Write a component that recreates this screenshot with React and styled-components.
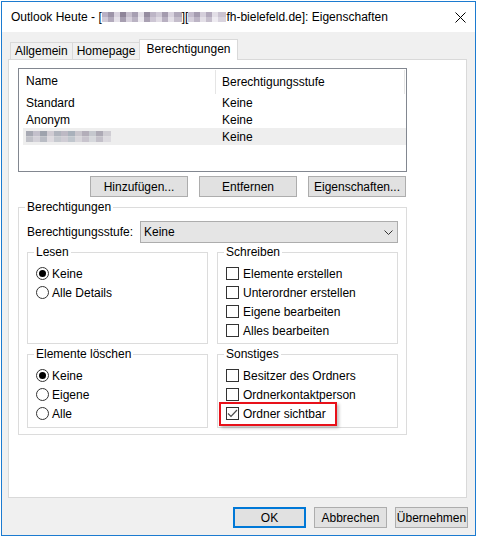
import React from "react";
import styled, { createGlobalStyle, css } from "styled-components";

const Global = createGlobalStyle`
  html, body { margin: 0; padding: 0; background: #ffffff; }
  body { font-family: "Liberation Sans", Arial, sans-serif; font-size: 12px; color: #000; }
  * { box-sizing: border-box; }
`;

const Window = styled.div`
  margin: 1px;
  width: 475px;
  height: 535px;
  border: 1px solid #1c7bd0;
  background: #f0f0f0;
  display: flex;
  flex-direction: column;
`;

const TitleBar = styled.div`
  height: 30px;
  flex: 0 0 30px;
  background: #ffffff;
  display: flex;
  align-items: center;
  padding: 0 9px;
  font-size: 12px;
  white-space: nowrap;
`;

const TitleText = styled.div`
  display: flex;
  align-items: center;
`;

const Mosaic = styled.span`
  display: inline-block;
  height: ${(p) => p.$h || 10}px;
  width: ${(p) => p.$w}px;
  background-image: ${(p) => p.$top}, ${(p) => p.$bottom};
  background-size: 100% 50%, 100% 50%;
  background-position: top left, bottom left;
  background-repeat: no-repeat;
`;

const CloseButton = styled.div`
  margin-left: auto;
  width: 11px;
  height: 11px;
  display: flex;
`;

const Body = styled.div`
  flex: 1;
  display: flex;
  flex-direction: column;
  padding: 7px 7px 0 6px;
`;

const TabStrip = styled.div`
  display: flex;
  align-items: flex-end;
  height: 21px;
  padding-left: 2px;
  margin-bottom: -1px;
  position: relative;
  z-index: 1;
`;

const Tab = styled.div`
  border: 1px solid #d9d9d9;
  border-bottom: none;
  height: 17px;
  margin-bottom: 1px;
  padding: 0 4px;
  line-height: 16px;
  background: #f0f0f0;
  & + & { margin-left: -1px; }
  ${(p) =>
    p.$active &&
    css`
      height: 21px;
      margin-bottom: 0;
      padding: 0 6px;
      line-height: 19px;
      background: #ffffff;
    `}
`;

const Panel = styled.div`
  width: 459px;
  height: 439px;
  flex: 0 0 439px;
  border: 1px solid #d9d9d9;
  background: #ffffff;
  padding: 8px 9px;
  display: flex;
  flex-direction: column;
  align-items: flex-start;
`;

const ListBox = styled.div`
  width: 389px;
  height: 104px;
  border: 1px solid #828790;
  background: #ffffff;
  padding-left: 4px;
`;

const ListHeader = styled.div`
  display: grid;
  grid-template-columns: 192px 190px;
  height: 25px;
`;

const HeaderCell = styled.div`
  display: flex;
  align-items: center;
  padding-left: ${(p) => (p.$first ? 3 : 6)}px;
  padding-bottom: 1px;
  ${(p) =>
    !p.$first &&
    css`
      border-left: 1px solid #e5e5e5;
      border-right: 1px solid #e5e5e5;
      margin-top: 1px;
    `}
`;

const ListRow = styled.div`
  display: grid;
  grid-template-columns: 192px 1fr;
  height: 17px;
  align-items: center;
  background: ${(p) => (p.$selected ? "#eeeeee" : "transparent")};
`;

const Cell = styled.div`
  padding-left: ${(p) => (p.$first ? 3 : 7)}px;
  display: flex;
  align-items: center;
`;

const ButtonRow = styled.div`
  width: 389px;
  display: flex;
  justify-content: flex-end;
  gap: 11px;
  margin-top: 4px;
  padding-right: 1px;
`;

const Button = styled.div`
  width: ${(p) => p.$w || 98}px;
  height: 21px;
  border: ${(p) => (p.$default ? "2px solid #0078d7" : "1px solid #adadad")};
  background: #e1e1e1;
  display: flex;
  align-items: center;
  justify-content: center;
`;

const Group = styled.fieldset`
  margin: 0;
  border: 1px solid #dcdcdc;
  padding: ${(p) => p.$pad || "4px 8px 3px 8px"};
  min-width: 0;
`;

const OuterGroup = styled(Group)`
  width: 389px;
  margin-top: 3px;
  padding: 6px 8px 6px 8px;
`;

const Legend = styled.legend`
  padding: 0 2px;
  margin-left: -2px;
  line-height: 15px;
  height: 15px;
  font-size: 12px;
`;

const SelectRow = styled.div`
  display: flex;
  align-items: center;
  height: 22px;
`;

const SelectLabel = styled.div`
  width: 113px;
  flex: 0 0 113px;
`;

const Select = styled.div`
  flex: 1;
  height: 22px;
  border: 1px solid #adadad;
  background: #e5e5e5;
  display: flex;
  align-items: center;
  padding: 0 4px 0 3px;
  justify-content: space-between;
`;

const GroupGrid = styled.div`
  display: grid;
  grid-template-columns: 181px 181px;
  column-gap: 9px;
  row-gap: 3px;
  margin-top: 2px;
`;

const Item = styled.div`
  position: relative;
  height: 19px;
  display: flex;
  align-items: center;
  gap: ${(p) => (p.$radio ? 3 : 4)}px;
`;

const RadioCircle = styled.span`
  width: 13px;
  height: 13px;
  flex: 0 0 13px;
  border: 1px solid #333333;
  border-radius: 50%;
  background: #ffffff;
  display: flex;
  align-items: center;
  justify-content: center;
  &::after {
    content: "";
    width: 7px;
    height: 7px;
    border-radius: 50%;
    background: ${(p) => (p.$checked ? "#000000" : "transparent")};
  }
`;

const CheckBox = styled.span`
  width: 13px;
  height: 13px;
  flex: 0 0 13px;
  border: 1px solid #333333;
  background: #ffffff;
  display: flex;
  align-items: center;
  justify-content: center;
`;

const Highlight = styled.div`
  position: absolute;
  left: -7px;
  top: -2px;
  width: 118px;
  height: 24px;
  border: 2px solid #e8111a;
  box-shadow: 2px 2px 3px rgba(0, 0, 0, 0.25);
  pointer-events: none;
`;

const Footer = styled.div`
  display: flex;
  justify-content: flex-end;
  gap: 8px;
  margin-top: 9px;
  padding-right: 0;
`;

const titleTop =
  "linear-gradient(90deg, #b9b0c4 0 6px, #9d94a8 6px 12px, #d9d3df 12px 18px, #8f8599 18px 24px, #c6bfcd 24px 30px, #a79fb2 30px 36px, #e3dfe7 36px 42px, #958c9f 42px 48px, #bdb5c6 48px 54px, #cfc9d6 54px 60px, #a49bae 60px 66px, #d8d2de 66px 72px, #b0a8ba 72px 80px)";
const titleBottom =
  "linear-gradient(90deg, #cfc8d6 0 6px, #b2aabc 6px 12px, #e6e2ea 12px 18px, #a69eb0 18px 24px, #d6d0dc 24px 30px, #bab3c3 30px 36px, #ece9ef 36px 42px, #aaa1b3 42px 48px, #cdc6d4 48px 54px, #e0dbe4 54px 60px, #b8b0c1 60px 66px, #e4e0e8 66px 72px, #c4bdcb 72px 80px)";
const titleTop2 =
  "linear-gradient(90deg, #c4bccd 0 6px, #a59cb0 6px 12px, #d5cfdb 12px 18px, #b2a9bc 18px 24px, #e2dee6 24px 30px, #cac3d1 30px 38px)";
const titleBottom2 =
  "linear-gradient(90deg, #d6d0dc 0 6px, #bcb4c5 6px 12px, #e3dfe7 12px 18px, #c6bfcd 18px 24px, #eeebf1 24px 30px, #d8d3de 30px 38px)";
const rowTop =
  "linear-gradient(90deg, #a7a9b3 0 7px, #c3c0cb 7px 14px, #9ea3ad 14px 21px, #d0ccd3 21px 28px, #b0b4bd 28px 35px, #bdb9c4 35px 42px, #a9b1bb 42px 49px, #c9c6cd 49px 56px, #b3aeb9 56px 63px, #c5c8ce 63px 70px, #adaab5 70px 77px, #cfcdd3 77px 85px)";
const rowBottom =
  "linear-gradient(90deg, #c0c1c8 0 7px, #d3d1d8 7px 14px, #b9bcc4 14px 21px, #dedbe0 21px 28px, #c6c9cf 28px 35px, #d0cdd5 35px 42px, #c0c6cd 42px 49px, #d8d6db 49px 56px, #c8c4cd 56px 63px, #d6d8dc 63px 70px, #c3c0c9 70px 77px, #dddbe0 77px 85px)";

function Radio({ checked, children }) {
  return (
    <Item $radio>
      <RadioCircle $checked={checked} />
      <span>{children}</span>
    </Item>
  );
}

function Check({ checked, highlight, children }) {
  return (
    <Item>
      <CheckBox>
        {checked && (
          <svg width="11" height="11" viewBox="0 0 11 11">
            <path d="M1 5.5 L4 8.5 L10 2" fill="none" stroke="#4d4d4d" strokeWidth="1.2" />
          </svg>
        )}
      </CheckBox>
      <span>{children}</span>
      {highlight && <Highlight />}
    </Item>
  );
}

export default function App() {
  return (
    <>
      <Global />
      <Window>
        <TitleBar>
          <TitleText>
            Outlook Heute - [
            <Mosaic $w={80} $top={titleTop} $bottom={titleBottom} />
            ][
            <Mosaic $w={38} $top={titleTop2} $bottom={titleBottom2} />
            fh-bielefeld.de]: Eigenschaften
          </TitleText>
          <CloseButton>
            <svg width="11" height="11" viewBox="0 0 11 11">
              <path d="M0.5 0.5 L10.5 10.5 M10.5 0.5 L0.5 10.5" stroke="#000" strokeWidth="1" fill="none" />
            </svg>
          </CloseButton>
        </TitleBar>
        <Body>
          <TabStrip>
            <Tab>Allgemein</Tab>
            <Tab>Homepage</Tab>
            <Tab $active>Berechtigungen</Tab>
          </TabStrip>
          <Panel>
            <ListBox>
              <ListHeader>
                <HeaderCell $first>Name</HeaderCell>
                <HeaderCell>Berechtigungsstufe</HeaderCell>
              </ListHeader>
              <ListRow>
                <Cell $first>Standard</Cell>
                <Cell>Keine</Cell>
              </ListRow>
              <ListRow>
                <Cell $first>Anonym</Cell>
                <Cell>Keine</Cell>
              </ListRow>
              <ListRow $selected>
                <Cell $first>
                  <Mosaic $w={85} $h={11} $top={rowTop} $bottom={rowBottom} />
                </Cell>
                <Cell>Keine</Cell>
              </ListRow>
            </ListBox>
            <ButtonRow>
              <Button>Hinzufügen...</Button>
              <Button>Entfernen</Button>
              <Button>Eigenschaften...</Button>
            </ButtonRow>
            <OuterGroup>
              <Legend>Berechtigungen</Legend>
              <SelectRow>
                <SelectLabel>Berechtigungsstufe:</SelectLabel>
                <Select>
                  <span>Keine</span>
                  <svg width="9" height="5" viewBox="0 0 9 5">
                    <path d="M0.5 0.5 L4.5 4.5 L8.5 0.5" fill="none" stroke="#333" strokeWidth="1" />
                  </svg>
                </Select>
              </SelectRow>
              <GroupGrid>
                <Group>
                  <Legend>Lesen</Legend>
                  <Radio checked>Keine</Radio>
                  <Radio>Alle Details</Radio>
                </Group>
                <Group>
                  <Legend>Schreiben</Legend>
                  <Check>Elemente erstellen</Check>
                  <Check>Unterordner erstellen</Check>
                  <Check>Eigene bearbeiten</Check>
                  <Check>Alles bearbeiten</Check>
                </Group>
                <Group $pad="4px 8px 4px 8px">
                  <Legend>Elemente löschen</Legend>
                  <Radio checked>Keine</Radio>
                  <Radio>Eigene</Radio>
                  <Radio>Alle</Radio>
                </Group>
                <Group $pad="4px 8px 4px 8px">
                  <Legend>Sonstiges</Legend>
                  <Check>Besitzer des Ordners</Check>
                  <Check>Ordnerkontaktperson</Check>
                  <Check checked highlight>
                    Ordner sichtbar
                  </Check>
                </Group>
              </GroupGrid>
            </OuterGroup>
          </Panel>
          <Footer>
            <Button $w={73} $default>
              OK
            </Button>
            <Button $w={73}>Abbrechen</Button>
            <Button $w={73}>Übernehmen</Button>
          </Footer>
        </Body>
      </Window>
    </>
  );
}
